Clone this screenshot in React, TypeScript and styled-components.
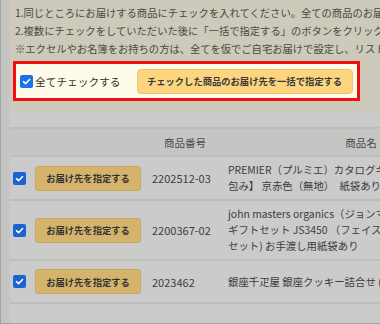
import styled, { createGlobalStyle } from "styled-components";

const GlobalStyle = createGlobalStyle`
    html, body {
        margin: 0;
        padding: 0;
        background: #cccccc;
    }
    body {
        font-family: "Noto Sans CJK JP", "Noto Sans", sans-serif;
    }
`;

const Frame = styled.div`
    display: flex;
    width: 380px;
    height: 324px;
    box-sizing: border-box;
    border-left: 1px solid #a3a3a3;
    border-bottom: 1px solid #a3a3a3;
    background: #cbcbcb;
    overflow: hidden;
`;

const Gutter = styled.div`
    width: 9px;
    flex-shrink: 0;
    background: #c5c5c3;
`;

const Content = styled.div`
    flex: 1;
    min-width: 0;
    overflow: hidden;
`;

const Notice = styled.div`
    background: #cdcabb;
    border-bottom-left-radius: 8px;
    padding: 4px 0 11px 2px;
`;

const NoticeLine = styled.div`
    font-size: 10.3px;
    line-height: 18px;
    color: #4a4943;
    white-space: nowrap;
    padding-left: 3px;
`;

const Highlight = styled.div`
    display: flex;
    align-items: center;
    width: 347px;
    height: 40px;
    margin: 3px 0 0 1px;
    box-sizing: border-box;
    border: 3px solid #ee1010;
    background: #fffbea;
    padding: 0 0 0 4px;
`;

const CheckLabel = styled.label`
    display: flex;
    align-items: center;
    gap: 2px;
    font-size: 10.7px;
    color: #333;
    white-space: nowrap;
`;

const Box = styled.span<{ $dim?: boolean }>`
    display: inline-flex;
    align-items: center;
    justify-content: center;
    width: 13px;
    height: 13px;
    border-radius: 2px;
    background: ${(p) => (p.$dim ? "#1c62d0" : "#1a73e8")};
    flex-shrink: 0;
`;

const BulkButton = styled.button`
    margin-left: 16px;
    height: 25px;
    width: 216px;
    padding: 0;
    border: 1px solid #ebc46c;
    border-radius: 4px;
    background: #fcd57e;
    font-family: inherit;
    font-size: 9.3px;
    font-weight: bold;
    color: #3a3a3a;
    white-space: nowrap;
`;

const Table = styled.div`
    margin-top: 15px;
    width: 520px;
    border-top: 2px solid #bdbdbd;
`;

const Row = styled.div<{ $head?: boolean }>`
    display: grid;
    grid-template-columns: 20px 115px 80px 272px;
    align-items: center;
    background: ${(p) => (p.$head ? "#c5c6c4" : "transparent")};
    border-bottom: 2px solid #bdbdbd;
    min-height: ${(p) => (p.$head ? "26px" : "auto")};
`;

const HeadCell = styled.div`
    font-size: 10.5px;
    color: #4a4a4a;
    text-align: center;
`;

const Cell = styled.div`
    padding: 6px 0;
    display: flex;
    align-items: center;
`;

const CheckCell = styled(Cell)`
    padding-left: 3px;
`;

const RowButton = styled.button`
    margin: 2px 0 2px 5px;
    width: 106px;
    height: 25px;
    padding: 0;
    border: 1px solid #c9a85c;
    border-radius: 3px;
    background: #d5b36c;
    font-family: inherit;
    font-size: 9.3px;
    font-weight: bold;
    color: #333;
    white-space: nowrap;
`;

const Code = styled.div`
    padding-left: 7px;
    font-size: 11px;
    color: #3d3d3d;
`;

const Name = styled.div`
    padding: 5px 0 5px 3px;
    font-size: 10.4px;
    line-height: 16px;
    color: #3d3d3d;
`;

const NameLine = styled.span`
    display: block;
    white-space: nowrap;
`;

const Check = ({ dim }: { dim?: boolean }) => (
    <Box $dim={dim}>
        <svg width="9" height="9" viewBox="0 0 10 10">
            <path d="M1.6 5.2 L4 7.4 L8.4 2.8" fill="none" stroke="#fff" strokeWidth="1.7" strokeLinecap="round" strokeLinejoin="round" />
        </svg>
    </Box>
);

const items = [
    {
        code: "2202512-03",
        name: ["PREMIER（プルミエ）カタログギフト【", "包み】 京赤色（無地）　紙袋あり"],
    },
    {
        code: "2200367-02",
        name: ["john masters organics（ジョンマスター", "ギフトセット JS3450 （フェイスケア", "セット) お手渡し用紙袋あり"],
    },
    {
        code: "2023462",
        name: ["銀座千疋屋 銀座クッキー詰合せ (ギフト)"],
    },
];

export default function App() {
    return (
        <>
            <GlobalStyle />
            <Frame>
                <Gutter />
                <Content>
                    <Notice>
                        <NoticeLine>1.同じところにお届けする商品にチェックを入れてください。全ての商品のお届け先を</NoticeLine>
                        <NoticeLine>2.複数にチェックをしていただいた後に「一括で指定する」のボタンをクリックしてください。</NoticeLine>
                        <NoticeLine>※エクセルやお名簿をお持ちの方は、全てを仮でご自宅お届けで設定し、リストを</NoticeLine>
                        <Highlight>
                            <CheckLabel>
                                <Check />
                                全てチェックする
                            </CheckLabel>
                            <BulkButton>チェックした商品のお届け先を一括で指定する</BulkButton>
                        </Highlight>
                    </Notice>

                    <Table>
                        <Row $head>
                            <div />
                            <div />
                            <HeadCell>商品番号</HeadCell>
                            <HeadCell>商品名</HeadCell>
                        </Row>
                        {items.map((item) => (
                            <Row key={item.code}>
                                <CheckCell>
                                    <Check dim />
                                </CheckCell>
                                <Cell>
                                    <RowButton>お届け先を指定する</RowButton>
                                </Cell>
                                <Code>{item.code}</Code>
                                <Name>
                                    {item.name.map((line) => (
                                        <NameLine key={line}>{line}</NameLine>
                                    ))}
                                </Name>
                            </Row>
                        ))}
                    </Table>
                </Content>
            </Frame>
        </>
    );
}
